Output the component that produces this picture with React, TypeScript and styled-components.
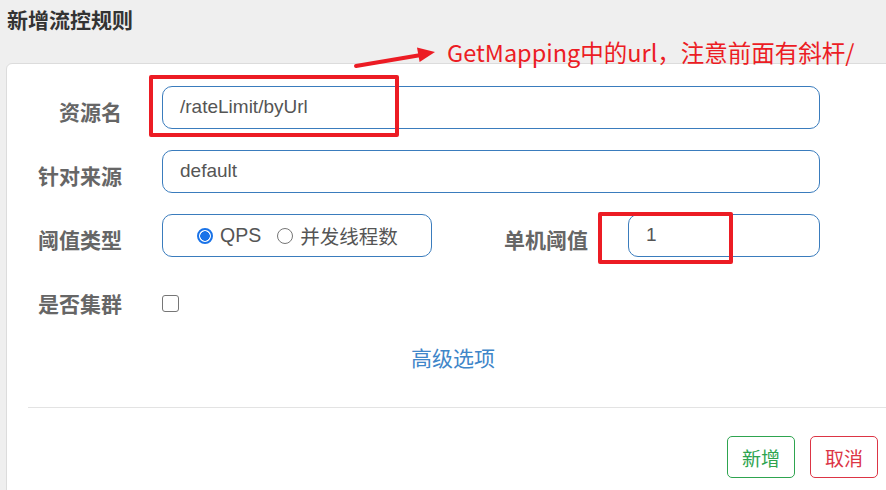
import React from "react";
import styled, { createGlobalStyle } from "styled-components";

const Global = createGlobalStyle`
  html, body { margin: 0; padding: 0; background: #efefef; overflow: hidden; }
  body { font-family: "Liberation Sans", "Noto Sans CJK SC", sans-serif; }
  * { box-sizing: border-box; }
`;

const Page = styled.div`
  position: relative;
  width: 886px;
  height: 490px;
  overflow: hidden;
  padding-left: 6px;
`;

const Title = styled.h4`
  margin: 0;
  padding: 5px 0 0 1px;
  height: 63px;
  font-family: "Noto Sans CJK SC", sans-serif;
  font-size: 21px;
  line-height: 28px;
  font-weight: 700;
  color: #333;
`;

const Card = styled.div`
  width: 900px;
  background: #fff;
  border: 1px solid #dcdcdc;
  border-radius: 6px;
  padding-top: 22px;
  height: 440px;
`;

const Form = styled.div`
  display: flex;
  flex-direction: column;
  gap: 21px;
`;

const Row = styled.div`
  display: flex;
  align-items: flex-start;
`;

const Label = styled.label<{ $w?: number }>`
  width: ${(p) => p.$w ?? 115}px;
  height: 43px;
  padding-top: 8px;
  line-height: 35px;
  text-align: right;
  font-family: "Noto Sans CJK SC", sans-serif;
  font-size: 21px;
  font-weight: 700;
  color: #666;
  flex: none;
  margin-right: 40px;
`;

const Input = styled.div<{ $w: number }>`
  width: ${(p) => p.$w}px;
  height: 43px;
  border: 1px solid #3a7cbd;
  border-radius: 10px;
  padding: 0 17px;
  font-size: 19px;
  line-height: 40px;
  color: #555;
  flex: none;
`;

const RadioBox = styled.div`
  width: 270px;
  height: 43px;
  border: 1px solid #3a7cbd;
  border-radius: 10px;
  padding-left: 34px;
  display: flex;
  align-items: center;
  font-size: 19px;
  color: #555;
  flex: none;
`;

const RadioItem = styled.span`
  display: inline-flex;
  align-items: center;
  gap: 7px;
  margin-right: 16px;
  font-family: "Liberation Sans", "Noto Sans CJK SC", sans-serif;
  font-size: 19.5px;
`;

const RadioDot = styled.span<{ $on?: boolean }>`
  width: 16px;
  height: 16px;
  border-radius: 50%;
  flex: none;
  border: ${(p) => (p.$on ? "2px solid #1a73e8" : "1px solid #767676")};
  background: ${(p) => (p.$on ? "radial-gradient(circle, #1a73e8 0 4.5px, #fff 5px)" : "#fff")};
`;

const Checkbox = styled.span`
  width: 17px;
  height: 17px;
  margin-top: 17px;
  border: 1.5px solid #767676;
  border-radius: 3px;
  flex: none;
`;

const Advanced = styled.div`
  width: 892px;
  margin-top: 15px;
  text-align: center;
  line-height: 42px;
  font-family: "Noto Sans CJK SC", sans-serif;
  font-size: 21px;
  color: #3f86c9;
`;

const Footer = styled.div`
  margin: 29px 0 0 21px;
  border-top: 1px solid #e3e3e3;
  padding: 28px 27px 0 0;
  display: flex;
  justify-content: flex-end;
  gap: 15px;
`;

const Button = styled.button<{ $c: string }>`
  height: 42px;
  padding: 0 14px;
  background: #fff;
  border: 1px solid ${(p) => p.$c};
  color: ${(p) => p.$c};
  border-radius: 5px;
  font-family: "Noto Sans CJK SC", sans-serif;
  font-size: 19px;
`;

const Mark = styled.div<{ $x: number; $y: number; $w: number; $h: number }>`
  position: absolute;
  left: ${(p) => p.$x}px;
  top: ${(p) => p.$y}px;
  width: ${(p) => p.$w}px;
  height: ${(p) => p.$h}px;
  border: 4px solid #ec1c24;
  border-radius: 2px;
`;

const Note = styled.div`
  position: absolute;
  left: 447px;
  top: 36px;
  font-family: "Noto Sans CJK SC", sans-serif;
  font-size: 23.5px;
  line-height: 32px;
  color: #ec1c24;
  white-space: nowrap;
`;

const ArrowSvg = styled.svg`
  position: absolute;
  left: 0;
  top: 0;
`;

export default function App() {
  return (
    <>
      <Global />
      <Page>
        <Title>新增流控规则</Title>
        <Card>
          <Form>
            <Row>
              <Label>资源名</Label>
              <Input $w={658}>/rateLimit/byUrl</Input>
            </Row>
            <Row>
              <Label>针对来源</Label>
              <Input $w={658}>default</Input>
            </Row>
            <Row>
              <Label>阈值类型</Label>
              <RadioBox>
                <RadioItem>
                  <RadioDot $on />
                  QPS
                </RadioItem>
                <RadioItem>
                  <RadioDot />
                  并发线程数
                </RadioItem>
              </RadioBox>
              <Label $w={156}>单机阈值</Label>
              <Input $w={192}>1</Input>
            </Row>
            <Row>
              <Label>是否集群</Label>
              <Checkbox />
            </Row>
          </Form>
          <Advanced>高级选项</Advanced>
          <Footer>
            <Button $c="#2ea44f">新增</Button>
            <Button $c="#dc3545">取消</Button>
          </Footer>
        </Card>

        <Mark $x={149} $y={75} $w={250} $h={62} />
        <Mark $x={598} $y={212} $w={135} $h={52} />
        <ArrowSvg width="886" height="100" viewBox="0 0 886 100">
          <line x1="356" y1="66" x2="421" y2="55" stroke="#ec1c24" strokeWidth="4" strokeLinecap="round" />
          <polygon points="435,52 417,47.5 419.6,62" fill="#ec1c24" />
        </ArrowSvg>
        <Note>GetMapping中的url，注意前面有斜杆/</Note>
      </Page>
    </>
  );
}
